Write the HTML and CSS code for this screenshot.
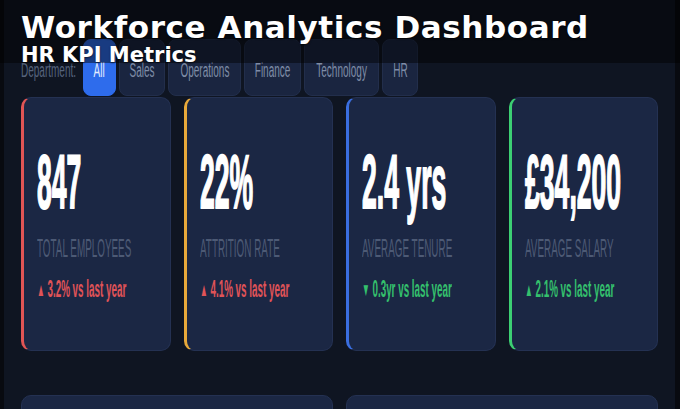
FILE: index.html
```html
<!DOCTYPE html>
<html>
<head>
<meta charset="UTF-8">
<title>Workforce Analytics Dashboard</title>
<link rel="stylesheet" href="styles.css">
</head>
<body>
<div id="screen">
  <div class="filters">
    <span class="filter-label"><span class="narrow">Department:</span></span>
    <span class="tab tab-all active"><span class="narrow">All</span></span>
    <span class="tab tab-sales"><span class="narrow">Sales</span></span>
    <span class="tab tab-ops"><span class="narrow">Operations</span></span>
    <span class="tab tab-fin"><span class="narrow">Finance</span></span>
    <span class="tab tab-tech"><span class="narrow">Technology</span></span>
    <span class="tab tab-hr"><span class="narrow">HR</span></span>
  </div>

  <div class="kpis">
    <div class="kpi red">
      <div class="value">847</div>
      <div class="label">TOTAL EMPLOYEES</div>
      <div class="change bad"><span class="arrow">&#9650;</span> 3.2% vs last year</div>
    </div>
    <div class="kpi amber">
      <div class="value">22%</div>
      <div class="label">ATTRITION RATE</div>
      <div class="change bad"><span class="arrow">&#9650;</span> 4.1% vs last year</div>
    </div>
    <div class="kpi blue">
      <div class="value">2.4 yrs</div>
      <div class="label">AVERAGE TENURE</div>
      <div class="change good"><span class="arrow">&#9660;</span> 0.3yr vs last year</div>
    </div>
    <div class="kpi green">
      <div class="value">&pound;34,200</div>
      <div class="label">AVERAGE SALARY</div>
      <div class="change good"><span class="arrow">&#9650;</span> 2.1% vs last year</div>
    </div>
  </div>

  <div class="panels">
    <div class="panel"></div>
    <div class="panel"></div>
  </div>
</div>

<div id="banner">
  <h1>Workforce Analytics Dashboard</h1>
  <h2>HR KPI Metrics</h2>
</div>
</body>
</html>
```

FILE: styles.css
```css
html, body {
  margin:0;
  height:100%;
}

body {
  background:#080a10;
  font-family:"Liberation Sans", Arial, sans-serif;
  overflow:hidden;
  position:relative;
}

#screen {
  margin:0 5px 0 4px;
  height:409px;
  overflow:hidden;
  background:#0f1522;
  padding:39px 17px 0 17px;
  box-sizing:border-box;
}

/* filter tabs */
.filters {
  display:flex;
  gap:3px;
  height:57px;
}

.filter-label,
.tab {
  display:flex;
  align-items:center;
  justify-content:center;
  padding-top:5px;
  box-sizing:border-box;
  font-size:20px;
  white-space:nowrap;
}

.filter-label {
  width:59px;
  justify-content:flex-start;
  color:#56637c;
}
.filter-label .narrow {
  transform-origin:left center;
}

.tab {
  background:#1a2540;
  border:1px solid #222e4b;
  border-radius:8px;
  color:#7e8ca6;
}
.tab.active {
  background:#2e6cec;
  border-color:#2e6cec;
  color:#e4ecff;
}

.tab-all { width:33px; }
.tab-sales { width:46px; }
.tab-ops { width:73px; }
.tab-fin { width:57px; }
.tab-tech { width:75px; }
.tab-hr { width:36px; }

.narrow {
  display:inline-block;
  transform:scaleX(0.5);
}

/* kpi cards */
.kpis {
  display:grid;
  grid-template-columns:repeat(4, minmax(0, 1fr));
  gap:13px;
  margin-top:1px;
}

.kpi {
  height:254px;
  min-width:0;
  overflow:hidden;
  box-sizing:border-box;
  background:#1b2744;
  border:1px solid #243152;
  border-left:3px solid #e05555;
  border-radius:10px;
  padding:45px 0 0 13px;
  white-space:nowrap;
}
.kpi.amber { border-left-color:#e8a93a; }
.kpi.blue { border-left-color:#3a6ee0; }
.kpi.green { border-left-color:#3ccf73; }

.value {
  width:300px;
  font-size:76px;
  line-height:77px;
  font-weight:bold;
  color:#fff;
  -webkit-text-stroke:2px #fff;
  transform:scaleX(0.35);
  transform-origin:left top;
}

.label {
  width:300px;
  margin-top:15px;
  font-size:26px;
  line-height:26px;
  color:#4d5a75;
  transform:scaleX(0.38);
  transform-origin:left top;
}

.change {
  width:300px;
  margin-top:16px;
  font-size:24px;
  line-height:24px;
  font-weight:bold;
  transform:scaleX(0.41);
  transform-origin:left top;
}
.change.bad { color:#e05357; }
.change.good { color:#34c06d; }

.arrow {
  font-size:19px;
  vertical-align:1px;
}

/* lower panels */
.panels {
  display:grid;
  grid-template-columns:repeat(2, minmax(0, 1fr));
  gap:13px;
  margin-top:44px;
}

.panel {
  height:120px;
  background:#1b2744;
  border:1px solid #243152;
  border-radius:10px;
}

/* title overlay */
#banner {
  position:absolute;
  top:0;
  left:0;
  right:0;
  height:63px;
  background:rgba(0, 0, 0, 0.45);
  padding:12px 0 0 21px;
  box-sizing:border-box;
  font-family:"DejaVu Sans", sans-serif;
  color:#fff;
}

#banner h1 {
  margin:0;
  font-size:31px;
  line-height:31px;
  font-weight:bold;
  letter-spacing:0.6px;
  text-shadow:0 1px 2px rgba(0, 0, 0, 0.6);
}

#banner h2 {
  margin:2px 0 0 0;
  font-size:21px;
  line-height:21px;
  font-weight:bold;
  text-shadow:0 1px 2px rgba(0, 0, 0, 0.6);
}
```
